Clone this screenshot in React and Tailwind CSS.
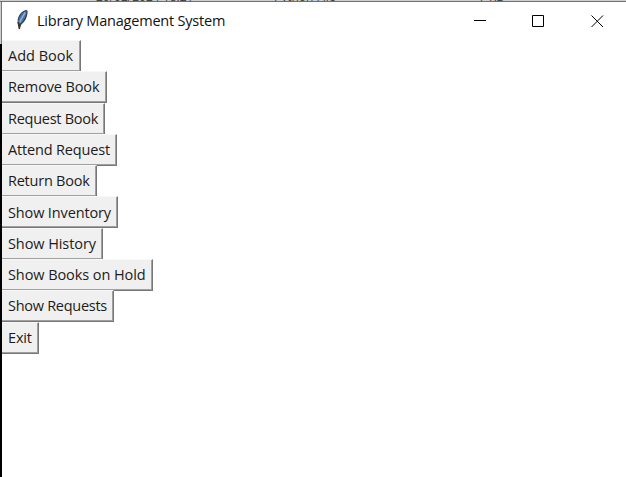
import React from 'react';

const actions = [
  { label: 'Add Book', size: 'w-[79px]', tracking: 'tracking-[0px]' },
  { label: 'Remove Book', size: 'w-[105px]', tracking: 'tracking-[-0.13px]' },
  { label: 'Request Book', size: 'w-[103px]', tracking: 'tracking-[-0.26px]' },
  { label: 'Attend Request', size: 'w-[115px]', tracking: 'tracking-[-0.17px]' },
  { label: 'Return Book', size: 'w-[95px]', tracking: 'tracking-[-0.24px]' },
  { label: 'Show Inventory', size: 'w-[116px]', tracking: 'tracking-[-0.14px]' },
  { label: 'Show History', size: 'w-[101px]', tracking: 'tracking-[-0.08px]' },
  { label: 'Show Books on Hold', size: 'w-[151px]', tracking: 'tracking-[-0.08px]' },
  { label: 'Show Requests', size: 'w-[112px]', tracking: 'tracking-[-0.28px]' },
  { label: 'Exit', size: 'w-[37px]', tracking: 'tracking-[-0.15px]' },
];

function Feather() {
  return (
    <svg width="14" height="22" viewBox="0 0 14 22" className="shrink-0">
      <path d="M12.3 1C7.5 1.4 3.8 5.6 2.8 10C2.2 12.8 2.5 15 3.5 16.8C8.4 14.8 11.2 10.5 12.2 5.5Z" fill="#4d719c" />
      <path d="M11.5 1.2C7 2.6 4.1 6.6 3.2 11" fill="none" stroke="#33465e" strokeWidth="1.1" />
      <path d="M10.2 3.5C8 6.8 5.9 10 4.9 13.5" fill="none" stroke="#8db0da" strokeWidth="1.5" />
      <path d="M12 2C12 7.5 9 12.8 5 15.8" fill="none" stroke="#2c3e58" strokeWidth="1.1" />
      <path d="M3.2 13L4.4 20.2M5.6 14.8L4.4 19" fill="none" stroke="#3a302c" strokeWidth="1.5" />
    </svg>
  );
}

function TitleBar() {
  return (
    <header className="flex h-[38px] shrink-0 items-center">
      <div className="ml-[13px] flex h-[36px] w-[22px] items-start"><div className="pt-[6px]"><Feather /></div></div>
      <h1 className="grow whitespace-nowrap text-[14.5px] leading-5 tracking-[-0.21px] text-[#111]">Library Management System</h1>
      <div className="mr-[22px] flex h-[38px] w-[131px] shrink-0 items-center justify-between text-black">
        <svg width="13" height="13" viewBox="0 0 13 13"><path d="M1 5.5H13" stroke="currentColor" /></svg>
        <svg width="13" height="13" viewBox="0 0 13 13"><path d="M.5 .5H11.5V11.5H.5Z" fill="none" stroke="currentColor" /></svg>
        <svg width="13" height="13" viewBox="0 0 13 13"><path d="M.5 .5L12 12M12 .5L.5 12" stroke="currentColor" /></svg>
      </div>
    </header>
  );
}

export default function App() {
  return (
    <div className="flex h-[477px] w-[626px] flex-col overflow-hidden bg-white font-['Open_Sans','Noto_Sans',sans-serif]">
      <div className="flex h-[2px] shrink-0 overflow-hidden border-b border-[#707070] bg-[#cecece] text-[12px] leading-3 text-[#444]">
        <div className="-mt-[9px] ml-[96px] w-[178px] shrink-0">20/02/2024 18:21</div>
        <div className="-mt-[9px] w-[205px] shrink-0">Python File</div>
        <div className="-mt-[9px]">7 KB</div>
      </div>
      <div className="flex min-h-0 grow">
        <div className="flex w-[2px] shrink-0 flex-col bg-black">
          <div className="h-[42px] border-r border-[#777] bg-[#cecece]" />
        </div>
        <main className="flex grow flex-col">
          <TitleBar />
          <nav className="flex flex-col items-start">
            {actions.map(({ label, size, tracking }) => (
              <div key={label} className="h-[31.3px]">
                <button className={`${size} ${tracking} flex h-[32px] items-center whitespace-nowrap border-t border-r border-b border-t-[#f8f8f8] border-r-[#777] border-b-[#777] bg-[#f0f0f0] pl-[6px] pt-[0.2px] text-[14.5px] leading-5 text-[#1c1c20] shadow-[inset_-1px_-1px_0_#a0a0a0]`}>
                  {label}
                </button>
              </div>
            ))}
          </nav>
        </main>
      </div>
    </div>
  );
}
